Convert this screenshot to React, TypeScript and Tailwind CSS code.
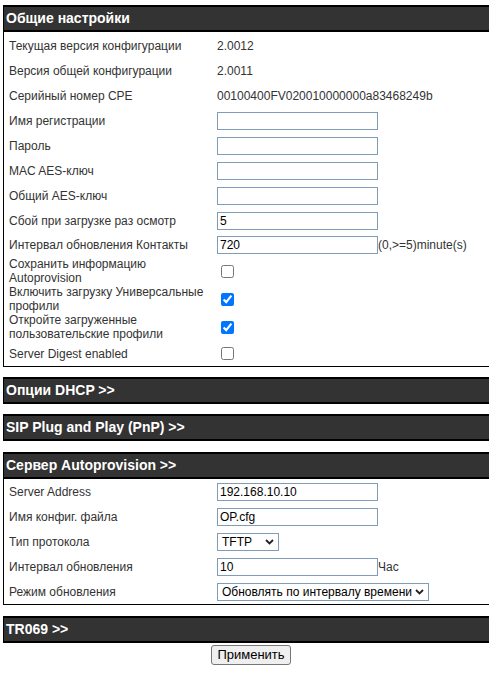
import React from "react";

const font = { fontFamily: '"Liberation Sans", Arial, sans-serif' };

function Header({ title }: { title: string }) {
  return (
    <div className="h-[27px] border-y-2 border-l border-black bg-[#333333] flex items-center pl-[2px] text-white font-bold text-[14px]">
      {title}
    </div>
  );
}

function Row({
  label,
  children,
  tall,
}: {
  label: string;
  children?: React.ReactNode;
  tall?: boolean;
}) {
  return (
    <div className={`flex items-center ${tall ? "h-[28px]" : "h-[25px]"}`}>
      <div className="w-[213px] pl-[5px] pr-[6px] text-[12px] leading-[14px] text-[#333]">{label}</div>
      <div className="flex items-center text-[12px] text-[#333]">{children}</div>
    </div>
  );
}

function TextInput({ value }: { value?: string }) {
  return (
    <input
      type="text"
      defaultValue={value}
      className="w-[161px] h-[18px] border border-[#7f9db9] bg-white px-[2px] text-[12px] text-black outline-none"
      style={font}
    />
  );
}

function Check({ checked }: { checked?: boolean }) {
  return (
    <input
      type="checkbox"
      defaultChecked={checked}
      className="ml-[4px] w-[13px] h-[13px] accent-[#0075ff]"
    />
  );
}

function Select({ value, width }: { value: string; width: string }) {
  return (
    <div
      className={`relative h-[18px] border border-[#7f9db9] bg-white flex items-center pl-[4px] text-[12px] text-black ${width}`}
    >
      <span>{value}</span>
      <svg
        className="absolute right-[4px] top-[5px]"
        width="9"
        height="6"
        viewBox="0 0 9 6"
      >
        <path d="M1 1 L4.5 4.5 L8 1" stroke="#222" strokeWidth="1.8" fill="none" />
      </svg>
    </div>
  );
}

export default function App() {
  return (
    <div className="w-[489px] h-[675px] overflow-hidden bg-white" style={font}>
      <div className="ml-[3px] w-[520px] pt-[5px]">
        <Header title="Общие настройки" />
        <div className="border-l border-b border-black pt-px">
          <Row label="Текущая версия конфигурации">2.0012</Row>
          <Row label="Версия общей конфигурации">2.0011</Row>
          <Row label="Серийный номер CPE">00100400FV020010000000a83468249b</Row>
          <Row label="Имя регистрации">
            <TextInput />
          </Row>
          <Row label="Пароль">
            <TextInput />
          </Row>
          <Row label="MAC AES-ключ">
            <TextInput />
          </Row>
          <Row label="Общий AES-ключ">
            <TextInput />
          </Row>
          <Row label="Сбой при загрузке раз осмотр">
            <TextInput value="5" />
          </Row>
          <div className="flex items-center h-[24px]">
            <div className="w-[213px] pl-[5px] pr-[6px] text-[12px] leading-[14px] text-[#333]">
              Интервал обновления Контакты
            </div>
            <div className="flex items-center text-[12px] text-[#333]">
              <TextInput value="720" />
              <span>(0,&gt;=5)minute(s)</span>
            </div>
          </div>
          <Row label="Сохранить информацию Autoprovision" tall>
            <Check />
          </Row>
          <Row label="Включить загрузку Универсальные профили" tall>
            <Check checked />
          </Row>
          <Row label="Откройте загруженные пользовательские профили" tall>
            <Check checked />
          </Row>
          <Row label="Server Digest enabled">
            <Check />
          </Row>
        </div>

        <div className="h-[10px]" />
        <Header title="Опции DHCP >>" />
        <div className="h-[10px]" />
        <Header title="SIP Plug and Play (PnP) >>" />
        <div className="h-[11px]" />
        <Header title="Сервер Autoprovision >>" />
        <div className="border-l border-b border-black">
          <Row label="Server Address">
            <TextInput value="192.168.10.10" />
          </Row>
          <Row label="Имя конфиг. файла">
            <TextInput value="OP.cfg" />
          </Row>
          <Row label="Тип протокола">
            <Select value="TFTP" width="w-[62px]" />
          </Row>
          <Row label="Интервал обновления">
            <TextInput value="10" />
            <span>Час</span>
          </Row>
          <Row label="Режим обновления">
            <Select value="Обновлять по интервалу времени" width="w-[212px]" />
          </Row>
        </div>
        <div className="h-[11px]" />
        <Header title="TR069 >>" />
      </div>
      <div className="pl-[211px] pt-[2px]">
        <button
          className="w-[80px] h-[20px] border border-[#767676] rounded-[3px] bg-[#efefef] text-[13px] text-black flex items-center justify-center"
          style={font}
        >
          Применить
        </button>
      </div>
    </div>
  );
}
